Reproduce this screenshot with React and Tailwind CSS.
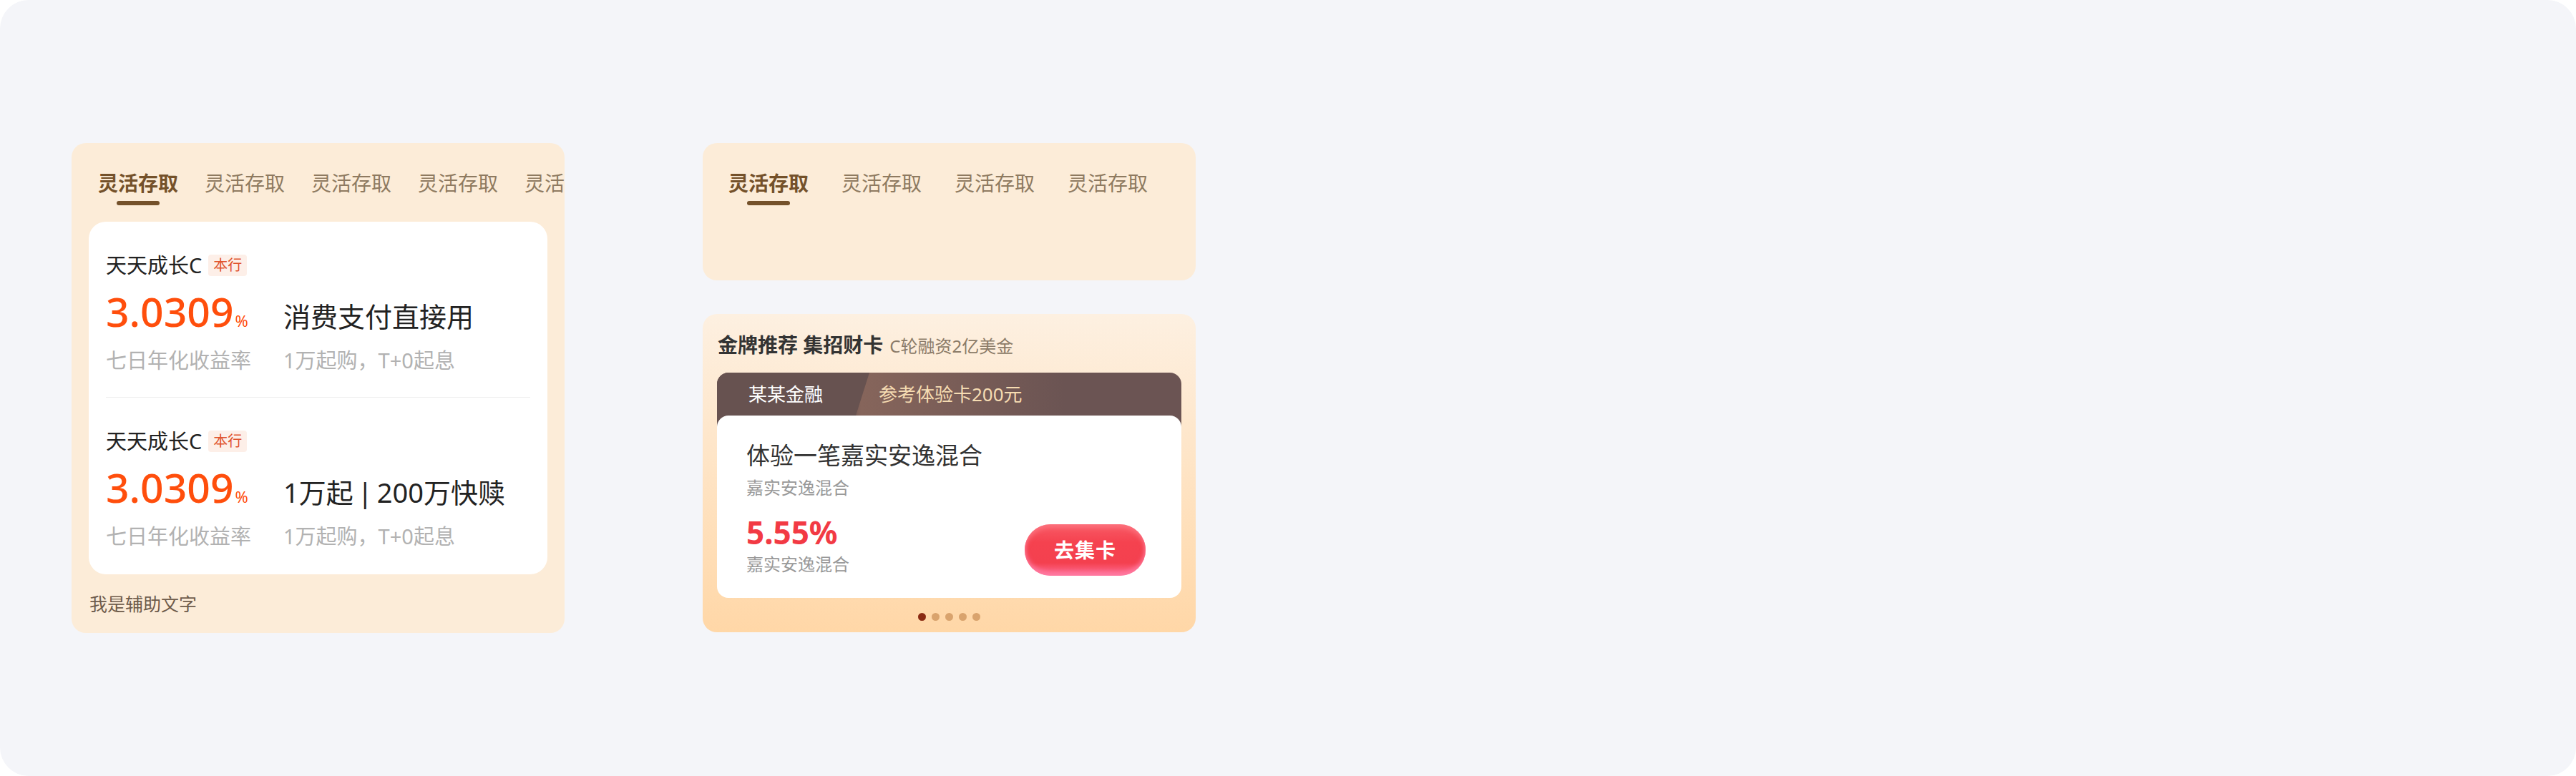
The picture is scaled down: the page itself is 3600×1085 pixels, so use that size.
import React from "react";

const FONT = "font-['Noto_Sans','Noto_Sans_CJK_SC',sans-serif]";

function Tabs({ count, gap }) {
  const items = Array.from({ length: count });
  return (
    <div className={`flex whitespace-nowrap pt-[36px] ${gap}`}>
      {items.map((_, i) => (
        <div key={i} className="flex flex-col items-center shrink-0">
          <span
            className={
              i === 0
                ? "text-[28px] leading-[40px] font-bold text-[#74512a]"
                : "text-[28px] leading-[40px] text-[#8e7a60]"
            }
          >
            灵活存取
          </span>
          <span
            className={
              i === 0
                ? "mt-[5px] w-[60px] h-[6px] rounded-full bg-[#74512a]"
                : "mt-[5px] w-[60px] h-[6px]"
            }
          />
        </div>
      ))}
    </div>
  );
}

function Product({ desc, divider }) {
  return (
    <div className={divider ? "pt-[45px] pb-[31px] border-b border-[#eeeeee]" : "pt-[45px]"}>
      <div className="flex items-center h-[32px]">
        <span className="text-[29px] leading-[32px] text-[#222222]">天天成长C</span>
        <span className="ml-[9px] h-[30px] px-[7px] rounded-[4px] bg-[#fdefe8] text-[20px] leading-[30px] text-[#e0532d]">
          本行
        </span>
      </div>
      <div className="mt-[20px] grid grid-cols-[248px_1fr] items-baseline">
        <div className="flex items-baseline">
          <span className="text-[57px] leading-[56px] font-medium text-[#ff4e0c]">3.0309</span>
          <span className="ml-[2px] text-[22px] leading-[22px] text-[#ff4e0c]">%</span>
        </div>
        <span className="text-[38px] leading-[56px] text-[#222222] whitespace-nowrap">{desc}</span>
      </div>
      <div className="mt-[14px] grid grid-cols-[248px_1fr] text-[29px] leading-[40px] text-[#b2b2b2] whitespace-nowrap">
        <span>七日年化收益率</span>
        <span>1万起购，T+0起息</span>
      </div>
    </div>
  );
}

export default function App() {
  return (
    <div className={`w-[3600px] h-[1085px] bg-white ${FONT}`}>
      <div className="w-full h-full rounded-[40px] bg-[#f4f5f9] flex items-start pt-[200px] pl-[100px] gap-[193px]">
        {/* Left card */}
        <div className="w-[689px] h-[685px] rounded-[20px] bg-[#fcecd8] overflow-hidden flex flex-col">
          <div className="pl-[37px]">
            <Tabs count={5} gap="gap-[37px]" />
          </div>
          <div className="mx-[24px] mt-[23px] h-[493px] bg-white rounded-[24px] px-[24px]">
            <Product desc="消费支付直接用" divider />
            <Product
              desc={
                <>
                  1万起<span className="mx-[6px]">|</span>200万快赎
                </>
              }
            />
          </div>
          <div className="pl-[25px] mt-[23px] text-[25px] leading-[36px] text-[#6e5b4b]">我是辅助文字</div>
        </div>

        {/* Right column */}
        <div className="w-[689px] flex flex-col gap-[47px]">
          <div className="h-[192px] rounded-[20px] bg-[#fcecd8] overflow-hidden pl-[36px]">
            <Tabs count={4} gap="gap-[46px]" />
          </div>

          <div className="h-[445px] rounded-[20px] bg-gradient-to-b from-[#fdf0e1] to-[#ffd7a7] px-[20px] flex flex-col">
            <div className="pt-[23px] pl-[1px] flex items-baseline whitespace-nowrap">
              <span className="text-[28px] leading-[40px] font-bold text-[#333333]">金牌推荐 集招财卡</span>
              <span className="ml-[9px] text-[24px] leading-[40px] text-[#8b7b68]">C轮融资2亿美金</span>
            </div>

            <div className="mt-[17px]">
              <div className="h-[76px] rounded-t-[16px] overflow-hidden bg-[linear-gradient(90deg,#675250_0%,#675250_28%,#86655b_31%,#6b5453_75%,#6b5453_100%)]">
                <div className="flex h-[60px] items-center whitespace-nowrap">
                  <div className="w-[213px] h-[60px] bg-[#675250] [clip-path:polygon(0_0,100%_0,calc(100%-19px)_100%,0_100%)] pl-[44px] text-[26px] leading-[60px] text-white">
                    某某金融
                  </div>
                  <div className="pl-[13px] text-[26px] leading-[60px] text-[#f6dcb2]">参考体验卡200元</div>
                </div>
              </div>
              <div className="relative -mt-[16px] h-[255px] rounded-[16px] bg-white pl-[41px] pr-[50px] pt-[34px]">
                <div className="text-[33px] leading-[44px] text-[#333333]">体验一笔嘉实安逸混合</div>
                <div className="mt-[6px] text-[24px] leading-[34px] text-[#999999]">嘉实安逸混合</div>
                <div className="mt-[23px] flex items-start justify-between">
                  <div className="flex flex-col">
                    <span className="text-[44px] leading-[44px] font-bold text-[#f23a44]">5.55%</span>
                    <span className="mt-[6px] text-[24px] leading-[34px] text-[#999999]">嘉实安逸混合</span>
                  </div>
                  <div className="mt-[11px] w-[169px] h-[72px] rounded-full flex items-center justify-center bg-[linear-gradient(180deg,#f85a66_0%,#f5424f_35%,#f4404f_75%,#ff6f98_100%)] shadow-[inset_0_-5px_6px_rgba(255,125,165,0.8),inset_0_5px_6px_rgba(255,130,140,0.6)] text-white text-[28px] font-bold tracking-[1px]">
                    去集卡
                  </div>
                </div>
              </div>
            </div>

            <div className="mt-[21px] flex justify-center gap-[8px]">
              <span className="w-[11px] h-[11px] rounded-full bg-[#8a2b12]" />
              <span className="w-[11px] h-[11px] rounded-full bg-[#d9a36d]" />
              <span className="w-[11px] h-[11px] rounded-full bg-[#d9a36d]" />
              <span className="w-[11px] h-[11px] rounded-full bg-[#d9a36d]" />
              <span className="w-[11px] h-[11px] rounded-full bg-[#d9a36d]" />
            </div>
          </div>
        </div>
      </div>
    </div>
  );
}
